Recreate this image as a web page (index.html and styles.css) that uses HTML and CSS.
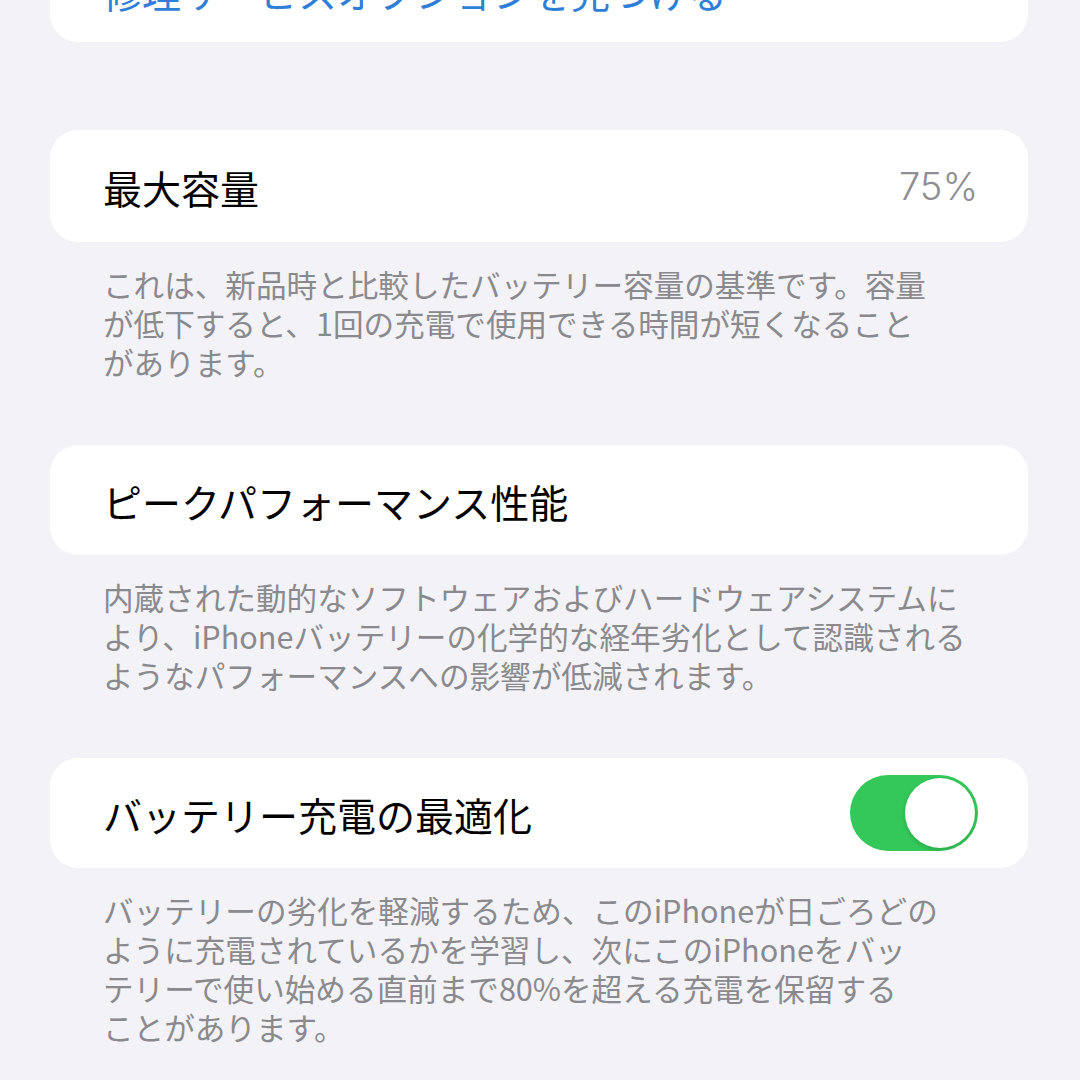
FILE: index.html
```html
<!DOCTYPE html>
<html lang="ja">
<head>
    <meta charset="UTF-8">
    <meta name="viewport" content="width=device-width, initial-scale=1.0">
    <title>バッテリーの状態</title>
    <link rel="stylesheet" href="styles.css">
</head>
<body>
    <div class="page">
        <div class="card card-link">
            <span class="link">修理サービスオプションを見つける</span>
        </div>

        <div class="card card-first">
            <span class="row-title">最大容量</span>
            <span class="row-value">75%</span>
        </div>
        <p class="footer">
            <span>これは、新品時と比較したバッテリー容量の基準です。容量</span>
            <span>が低下すると、1回の充電で使用できる時間が短くなること</span>
            <span>があります。</span>
        </p>

        <div class="card">
            <span class="row-title">ピークパフォーマンス性能</span>
        </div>
        <p class="footer">
            <span>内蔵された動的なソフトウェアおよびハードウェアシステムに</span>
            <span>より、iPhoneバッテリーの化学的な経年劣化として認識される</span>
            <span>ようなパフォーマンスへの影響が低減されます。</span>
        </p>

        <div class="card">
            <span class="row-title">バッテリー充電の最適化</span>
            <span class="switch on"><span class="knob"></span></span>
        </div>
        <p class="footer">
            <span>バッテリーの劣化を軽減するため、このiPhoneが日ごろどの</span>
            <span>ように充電されているかを学習し、次にこのiPhoneをバッ</span>
            <span>テリーで使い始める直前まで80%を超える充電を保留する</span>
            <span>ことがあります。</span>
        </p>
    </div>
</body>
</html>
```

FILE: styles.css
```css
body {
    margin: 0;
    background-color: #f2f2f7;
    font-family: "Noto Sans CJK JP", sans-serif;
    overflow: hidden;
}

.page {
    padding: 0 52px 0 50px;
    margin-top: -37px;
}

.card {
    background-color: #ffffff;
    border-radius: 28px;
    height: 110px;
    padding: 0 50px 0 53px;
    display: flex;
    align-items: center;
    justify-content: space-between;
}

/* the top card only peeks in */
.card-link {
    height: auto;
    padding-top: 5px;
    padding-bottom: 28px;
}

.link {
    color: #2f7fd8;
    font-size: 39px;
    line-height: 46px;
}

.card-first {
    margin-top: 88px;
    height: 112px;
}

.row-title {
    color: #000000;
    font-size: 39px;
    line-height: 46px;
    padding-top: 2px;
}

.row-value {
    color: #8e8e93;
    font-family: Inter, "Noto Sans CJK JP", sans-serif;
    font-weight: 300;
    font-size: 38px;
    line-height: 46px;
}

.footer {
    margin: 0;
    padding: 23px 0 63px 53px;
    color: #8a8a8e;
    font-size: 30.6px;
    line-height: 39px;
}

.footer span {
    display: block;
    white-space: nowrap;
}

.switch {
    width: 128px;
    height: 76px;
    border-radius: 38px;
    background-color: #34c759;
    display: flex;
    align-items: center;
    justify-content: flex-end;
    padding: 0 3px;
    box-sizing: border-box;
}

.knob {
    width: 70px;
    height: 70px;
    border-radius: 50%;
    background-color: #ffffff;
    box-shadow: 0 2px 4px rgba(0, 0, 0, 0.15);
}
```
